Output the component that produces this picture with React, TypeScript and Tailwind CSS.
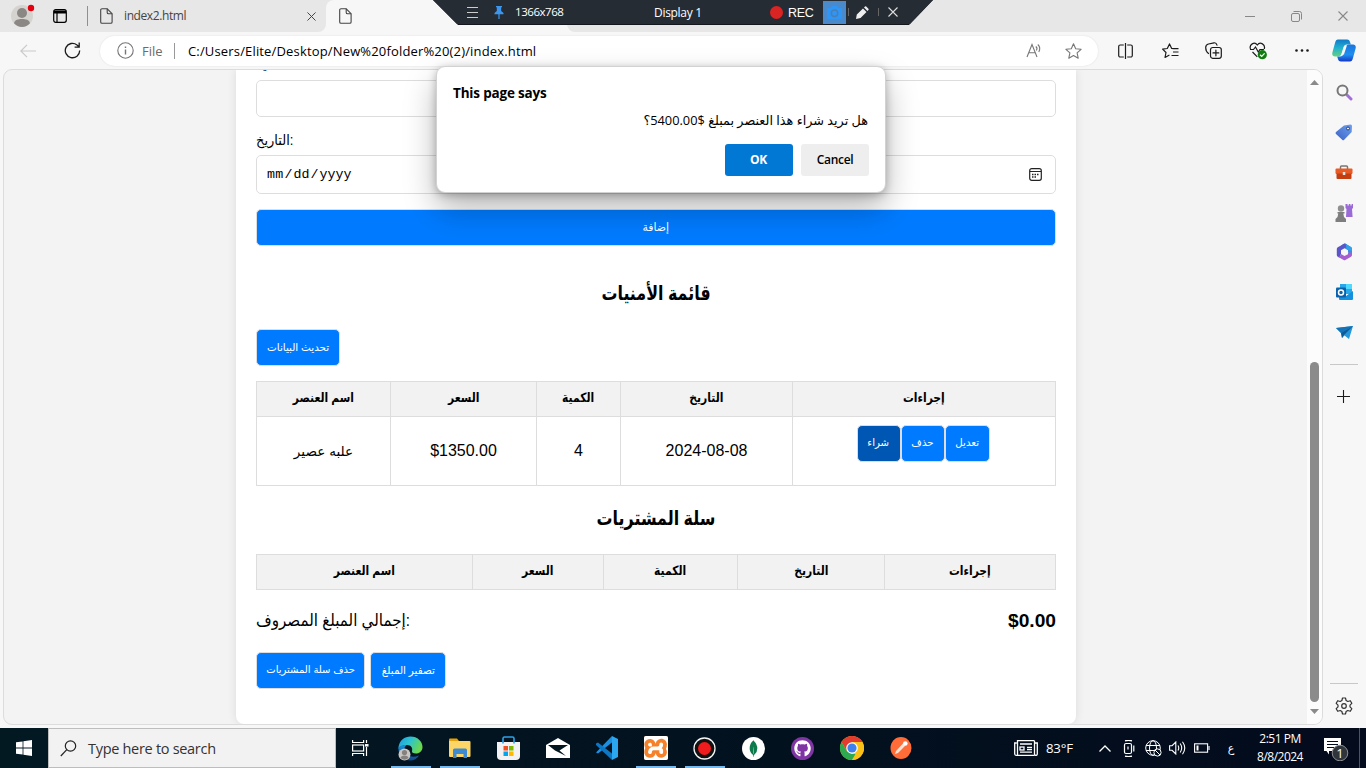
import type { ReactNode } from "react";
import { SiXampp, SiMongodb } from "react-icons/si";
import { FaGithub } from "react-icons/fa";

const UI = "font-['Open_Sans','Noto_Sans',sans-serif]";
const PAGE = "font-['Liberation_Sans','DejaVu_Sans',sans-serif]";

/* ---------- browser icons ---------- */

const FileIcon = () => (
  <svg width="13" height="16" viewBox="0 0 13 16" fill="none" stroke="#444" strokeWidth="1.1">
    <path d="M2 .8h5.2l4.9 4.9v8.2a1.3 1.3 0 0 1-1.3 1.3H2A1.3 1.3 0 0 1 .7 13.9V2.1A1.3 1.3 0 0 1 2 .8Z" />
    <path d="M7.2.8v3.6a1.3 1.3 0 0 0 1.3 1.3h3.6" />
  </svg>
);

const Cross = ({ size, color }: { size: number; color: string }) => (
  <svg width={size} height={size} viewBox="0 0 10 10" stroke={color} strokeWidth="1.1" fill="none">
    <path d="M.5.5l9 9M9.5.5l-9 9" />
  </svg>
);

const TabStrip = () => (
  <div className="flex h-8 w-full shrink-0 bg-[#f7f7f7]">
    <div className="flex w-[326px] items-center rounded-br-lg bg-[#e7e7e7] pl-[11px]">
      <svg width="24" height="24" viewBox="0 0 24 24">
        <circle cx="11" cy="12" r="11" fill="#d5d3d0" />
        <circle cx="11" cy="9" r="5" fill="#8b8784" />
        <path d="M3 19.3C4 15.6 7 15 11 15s7 .6 8 4.300C17 21.600 14 23 11 23s-6-1.400-8-3.700Z" fill="#8b8784" />
        <circle cx="20" cy="4" r="3.200" fill="#e3000f" />
      </svg>
      <svg className="ml-[18px]" width="14" height="14" viewBox="0 0 14 14" fill="none" stroke="#000" strokeWidth="1.200">
        <rect x=".7" y=".7" width="12.600" height="12.600" rx="2" />
        <path d="M1 3h12" strokeWidth="3" />
        <path d="M4 4v9" />
      </svg>
      <div className="ml-5 h-5 w-px bg-[#8f8f8f]" />
      <div className="ml-3"><FileIcon /></div>
      <span className={`${UI} ml-[11px] w-[180px] text-[12px] leading-4 tracking-[-0.4px] text-[#444]`}>index2.html</span>
      <div className="ml-[3px]"><Cross size={9} color="#444" /></div>
    </div>
    <div className="w-[241px] bg-linear-to-b from-[#e7e7e7] from-50% to-[#f7f7f7] to-50%">
      <div className="flex h-full items-center rounded-t-lg bg-[#f7f7f7] pl-[13px]"><FileIcon /></div>
    </div>
    <div className="flex flex-1 items-center justify-end rounded-bl-lg bg-[#e7e7e7] pr-[18px]">
      <div className="h-px w-[10px] bg-[#888]" />
      <svg className="ml-9" width="11" height="11" viewBox="0 0 11 11" fill="none" stroke="#888">
        <rect x=".5" y="2.500" width="8" height="8" rx="1.500" />
        <path d="M2.500 .5h6a2 2 0 0 1 2 2v6" />
      </svg>
      <div className="ml-9"><Cross size={10} color="#888" /></div>
    </div>
  </div>
);

const Copilot = () => (
  <svg width="24" height="23" viewBox="0 0 24 23">
    <defs>
      <linearGradient id="cpa" x1="0" y1="0" x2="0" y2="1"><stop offset="0" stopColor="#1279c9" /><stop offset=".5" stopColor="#21b1cf" /><stop offset="1" stopColor="#65d27d" /></linearGradient>
      <linearGradient id="cpb" x1="0" y1="0" x2="0" y2="1"><stop offset="0" stopColor="#1b75dd" /><stop offset=".6" stopColor="#1e8ff0" /><stop offset="1" stopColor="#1637c7" /></linearGradient>
    </defs>
    <path d="M6 .5h9c2 0 2.600 1 3.200 3l.6 2H15c-2 0-3 1-3.600 3L9.500 15c-.6 1.600-1.500 2.500-3.500 2.500H3C.8 17.500-.2 16 .4 13.500L3 4C3.600 1.500 4.500.5 6 .5Z" fill="url(#cpa)" />
    <path d="M18 22.500H9c-2 0-2.600-1-3.200-3l-.6-2H8c2 0 3-1 3.600-3L13.500 8c.6-1.600 1.500-2.500 3.500-2.500h4c2.200 0 3.200 1.500 2.600 4L21 19c-.6 2.500-1.500 3.500-3 3.500Z" fill="url(#cpb)" />
    <path d="M12.200 7.500 15 6.200 12 15.300 8.800 16.900Z" fill="#f7f7f7" />
  </svg>
);

const Toolbar = () => (
  <div className="flex h-[37px] w-full shrink-0 items-center bg-[#f7f7f7]">
    <svg className="ml-5" width="16" height="14" viewBox="0 0 16 14" fill="none" stroke="#c9c9c9" strokeWidth="1.200"><path d="M16 7H1M7 .8.8 7 7 13.200" /></svg>
    <svg className="ml-7" width="17" height="17" viewBox="0 0 17 17" fill="none" stroke="#1b1b1b" strokeWidth="1.300"><path d="M15.700 8.500A7.200 7.200 0 1 1 13 2.900L15 5M15.200.6V5.200H10.600" /></svg>
    <div className="ml-[19px] flex h-[30px] w-[998px] items-center rounded-full bg-white pl-[17px] shadow-[0_0_2px_#ddd]">
      <svg width="17" height="17" viewBox="0 0 17 17" fill="none" stroke="#767676" strokeWidth="1.100"><circle cx="8.500" cy="8.500" r="7.700" /><path d="M8.500 7.500v5M8.500 4.500v1.400" strokeWidth="1.400" /></svg>
      <span className={`${UI} ml-2 w-8 text-[13px] leading-4 text-[#6b6b6b]`}>File</span>
      <div className="h-4 w-px bg-[#999]" />
      <span className={`${UI} ml-[13px] w-[838px] whitespace-nowrap text-[13px] leading-4 tracking-[0.16px] text-black`}>C:/Users/Elite/Desktop/New%20folder%20(2)/index.html</span>
      <svg width="17" height="15" viewBox="0 0 17 15" fill="none" stroke="#777" strokeWidth="1.100"><path d="M1 14 6 1.500 11 14M2.800 9.800h6.400M9.800 3.500c1.300 1 1.300 2.800.6 4M11.800 1.500c2.200 2 2.200 5.200 1 7.500" /></svg>
      <svg className="ml-[22px]" width="17" height="16" viewBox="0 0 17 16" fill="none" stroke="#777" strokeWidth="1.100" strokeLinejoin="round"><path d="m8.500.8 2.200 4.900 5.400.6-4 3.600 1.100 5.300-4.700-2.700-4.700 2.700 1.100-5.300-4-3.600 5.400-.6Z" /></svg>
    </div>
    <svg className="ml-5" width="15" height="16" viewBox="0 0 15 16" fill="none" stroke="#1b1b1b" strokeWidth="1.200"><path d="M5.800 2H2.200A1.500 1.500 0 0 0 .7 3.500v9A1.500 1.500 0 0 0 2.200 14h3.600M9.200 2h3.600a1.500 1.500 0 0 1 1.500 1.500v9a1.500 1.500 0 0 1-1.500 1.500H9.200M7.500 0v16" /></svg>
    <svg className="ml-[29px]" width="17" height="16" viewBox="0 0 17 16" fill="none" stroke="#1b1b1b" strokeWidth="1.200" strokeLinejoin="round"><path d="M11.500 5.600 9.700 5.500 7.500.9 5.300 5.500.6 6.100 4 9.500l-1 5 4.400-2.500M11.500 5.600h5M11 9h5.500M9.500 12.500h7" /></svg>
    <svg className="ml-[26px]" width="17" height="17" viewBox="0 0 17 17" fill="none" stroke="#1b1b1b" strokeWidth="1.200" strokeLinecap="round"><rect x="5.500" y="5.500" width="10.800" height="10.800" rx="2.200" /><path d="M10.900 8v5.800M8 10.900h5.800M3.500 11.500C2 10.500.7 8 .7 5.500.7 3 1.500 2.500 3.500 2L9 .8c1.500-.3 2.500.6 3 2.400" /></svg>
    <svg className="ml-[27px]" width="18" height="18" viewBox="0 0 18 18" fill="none" stroke="#1b1b1b" strokeWidth="1.200"><path d="M1.500 7C-.2 2.500 5.500-.8 8.300 3c2.800-3.800 8.500-.5 6.900 4M1 7.500h3.500L6.500 5l2.800 5 1.600-2.500h4M3.500 10l4.800 4.800" /><circle cx="13.300" cy="12.700" r="4.600" fill="#107c10" stroke="none" /><path d="m11 12.800 1.700 1.600 2.900-3" stroke="#fff" /></svg>
    <svg className="ml-[28px]" width="14" height="3" viewBox="0 0 14 3" fill="#1b1b1b"><circle cx="1.500" cy="1.500" r="1.300" /><circle cx="7" cy="1.500" r="1.300" /><circle cx="12.500" cy="1.500" r="1.300" /></svg>
    <div className="ml-[23px]"><Copilot /></div>
  </div>
);

/* ---------- page ---------- */

const Btn = ({ children, className }: { children: ReactNode; className: string }) => (
  <button className={`flex h-[37px] items-center justify-center whitespace-nowrap rounded-[5px] border border-[#ddd] pb-px text-white ${className}`}>
    <span className="inline-block scale-x-97">{children}</span>
  </button>
);

const HEAD = ["اسم العنصر", "السعر", "الكمية", "التاريخ", "إجراءات"];

const HeadRow = () => (
  <tr className="h-9">
    {HEAD.map((h) => (
      <th key={h} className="border-y border-r border-[#ddd] bg-[#f2f2f2] p-0 pb-0.5 text-[12.800px] leading-4 font-bold first:border-l">
        <span className="inline-block scale-x-84">{h}</span>
      </th>
    ))}
  </tr>
);

const Cell = ({ children, top = false }: { children: ReactNode; top?: boolean }) => (
  <td className={`border-r border-b border-[#ddd] p-0 text-center first:border-l ${top ? "pt-2 align-top" : "align-middle"}`}>{children}</td>
);

const PageContent = () => (
  <div className={`${PAGE} flex w-[840px] flex-col rounded-b-lg bg-white px-5 text-black shadow-[0_0_10px_rgba(0,0,0,0.1)]`}>
    <label className="-mt-[13px] block h-[18px] origin-left scale-x-92 text-[14px] leading-[15px]">الكمية:</label>
    <div className="mt-[5px] h-[37px] shrink-0 rounded-[5px] border border-[#ddd]" />
    <label className="mt-[15px] block h-[18px] origin-left scale-x-93 text-[14px] leading-[17px]">التاريخ:</label>
    <div className="mt-[5px] flex h-[39px] shrink-0 items-center justify-between rounded-[5px] border border-[#ddd] pr-[13px] pl-[10px]">
      <span className="font-['Liberation_Mono',monospace] text-[13.333px] leading-4">
        <span className="tracking-[0.2px]">mm</span><span className="mx-[1px]">/</span>dd<span className="mx-[1px]">/</span>yyyy
      </span>
      <svg width="13" height="13" viewBox="0 0 13 13" fill="none" stroke="#222"><rect x=".7" y=".7" width="11.600" height="11.600" rx="2" strokeWidth="1.200" /><path d="M1 3.500h11" /><path d="M3 6.500h7M3 9h4.500" strokeWidth="1.500" strokeDasharray="1.500 1" /></svg>
    </div>
    <Btn className="mt-[15px] w-full shrink-0 bg-[#007bff] text-[11.200px]">إضافة</Btn>
    <h2 className="mt-[33px] h-7 scale-x-[0.795] text-center text-[20px] leading-[28px] font-bold">قائمة الأمنيات</h2>
    <Btn className="mt-[22px] w-[84px] shrink-0 bg-[#007bff] text-[10.700px]">تحديث البيانات</Btn>
    <table className="mt-[15px] w-[800px] table-fixed border-separate border-spacing-0">
      <colgroup>
        <col className="w-[135px]" /><col className="w-[146px]" /><col className="w-[84px]" /><col className="w-[172px]" /><col className="w-[263px]" />
      </colgroup>
      <thead><HeadRow /></thead>
      <tbody>
        <tr className="h-[69px]">
          <Cell><span className="text-[13.600px]">علبه عصير</span></Cell>
          <Cell>$1350.00</Cell>
          <Cell>4</Cell>
          <Cell>2024-08-08</Cell>
          <Cell top>
            <div className="flex justify-center pr-[2px]">
              <Btn className="w-11 bg-[#0056b3] text-[10.500px]">شراء</Btn>
              <Btn className="w-11 bg-[#007bff] text-[10.500px]">حذف</Btn>
              <Btn className="w-[45px] bg-[#007bff] text-[10.500px]">تعديل</Btn>
            </div>
          </Cell>
        </tr>
      </tbody>
    </table>
    <h2 className="mt-[18px] h-7 scale-x-[0.795] text-center text-[20px] leading-[28px] font-bold">سلة المشتريات</h2>
    <table className="mt-[22px] w-[800px] table-fixed border-separate border-spacing-0">
      <colgroup>
        <col className="w-[217px]" /><col className="w-[131px]" /><col className="w-[134px]" /><col className="w-[147px]" /><col className="w-[171px]" />
      </colgroup>
      <thead><HeadRow /></thead>
    </table>
    <div className="mt-[20px] flex h-[22px] items-center justify-between">
      <span className="inline-block origin-left scale-x-[0.89] text-[17px] leading-[22px]">إجمالي المبلغ المصروف:</span>
      <span className="text-[19.200px] leading-[22px] font-bold">$0.00</span>
    </div>
    <div className="mt-[20px] flex gap-[5px]">
      <Btn className="w-[109px] bg-[#007bff] text-[10.300px]">حذف سلة المشتريات</Btn>
      <Btn className="w-[76px] bg-[#007bff] text-[10.700px]">تصفير المبلغ</Btn>
    </div>
  </div>
);

const Scrollbar = () => (
  <div className="flex w-[15px] flex-col items-center bg-[#fcfcfc]">
    <svg className="mt-2.5" width="9" height="5" viewBox="0 0 9 5" fill="#8b8b8b"><path d="M4.500 0 9 5H0Z" /></svg>
    <div className="mt-[277px] h-[340px] w-[9px] rounded-full bg-[#8b8b8b]" />
    <svg className="mt-[7px]" width="9" height="5" viewBox="0 0 9 5" fill="#8b8b8b"><path d="M4.500 5 9 0H0Z" /></svg>
  </div>
);

/* ---------- sidebar ---------- */

const Slot = ({ children }: { children: ReactNode }) => (
  <div className="flex h-10 w-full items-center justify-center">{children}</div>
);

const Sidebar = () => (
  <div className="flex w-[42px] flex-col items-center pt-[3px]">
    <Slot>
      <svg width="17" height="17" viewBox="0 0 17 17" fill="none"><path d="m11 11 4 4" stroke="#a070d8" strokeWidth="3" strokeLinecap="round" /><circle cx="6.500" cy="6.500" r="5" stroke="#777" strokeWidth="2" /></svg>
    </Slot>
    <Slot>
      <svg width="18" height="17" viewBox="0 0 18 17"><defs><linearGradient id="tag" x1="1" y1="0" x2="0" y2="1"><stop stopColor="#6fa0f0" /><stop offset="1" stopColor="#3a62c4" /></linearGradient></defs><path d="M9 1.500 15.500.5Q17 .5 17 2l-.3 6L9.200 15.700q-1 1-2 0L1 10Q0 9 1 8Z" fill="url(#tag)" /><circle cx="13" cy="4.500" r="1.500" fill="#eee" stroke="#22407f" /></svg>
    </Slot>
    <Slot>
      <svg width="18" height="15" viewBox="0 0 18 15"><path d="M5.500 4V2a1 1 0 0 1 1-1h5a1 1 0 0 1 1 1v2" fill="none" stroke="#777" strokeWidth="1.500" /><rect x=".5" y="3.500" width="17" height="5.500" rx="1" fill="#ea5a24" /><path d="M1.500 8.500h15V13q0 1-1 1h-13q-1 0-1-1Z" fill="#c43e12" /><rect x="7.800" y="7" width="2.500" height="3" fill="#e5e5e5" /></svg>
    </Slot>
    <Slot>
      <svg className="mt-px" width="18" height="18" viewBox="0 0 18 18"><path d="M10.500 0h2v1.500h1.300V0h1.600v1.500h1.200V0H18v4l-1 1 .6 8H11l.5-8-1-1Z" fill="#9a6ad6" /><circle cx="6" cy="4.500" r="3.200" fill="#8f8f8f" /><path d="M2.500 8h7v1.500H8.300L9 13l2 2v3H.5v-3l2-2 .8-3.500h-.8Z" fill="#7e7e7e" /></svg>
    </Slot>
    <Slot>
      <svg width="17" height="18" viewBox="0 0 17 18"><path d="M5.500 2.300 8 .8q.8-.5 1.600 0l5.400 3.200q1 .6 1 1.700v6L12 9.500V7.200L6 3.800Z" fill="#3b8be0" /><path d="M8.500.5 1.800 4.200q-1 .6-1 1.700v6.200q0 1 1 1.600l1.700 1L5 11V7.200l3.500-2L11 3.800V1.600L9.500.7Z" fill="#5a55c8" /><path d="M2 13.800 7.600 17q.9.500 1.800 0l5.600-3.300q1-.6 1-1.700V9.500l-4 .2v1.500L8.500 13 5 11Q4.500 14 2 13.800Z" fill="#a75fd0" /><path d="M9.500.7 15 4q1 .6 1 1.700V8L11 6.500Z" fill="#2ea3ea" /><path d="m8.500 6 2.700 1.500v3L8.500 12l-2.700-1.500v-3Z" fill="#f7f7f7" /></svg>
    </Slot>
    <Slot>
      <svg width="17" height="16" viewBox="0 0 17 16"><rect x="4" y="0" width="12" height="10" fill="#28a8ea" /><rect x="10" y="0" width="6" height="5" fill="#50d9ff" /><path d="M3 8l7 4 7-5v8q0 1-1 1H4q-1 0-1-1Z" fill="#1490df" /><rect x="0" y="3.500" width="10" height="10" rx="1" fill="#0a62ad" /><circle cx="5" cy="8.500" r="2.500" fill="none" stroke="#fff" strokeWidth="1.500" /></svg>
    </Slot>
    <Slot>
      <svg className="mt-0.5" width="17" height="14" viewBox="0 0 17 14"><path d="M0 2 17 0 13 13 8.500 9.500 6 12 5 7Z" fill="#2397dc" /><path d="M0 2 17 0 5 7Z" fill="#1473b8" /><path d="m5 7 12-7L8 9l-2 3Z" fill="#0d5a96" /></svg>
    </Slot>
    <div className="mt-3 h-px w-7 bg-[#c8c8c8]" />
    <svg className="mt-[25px] mr-px" width="13" height="13" viewBox="0 0 13 13" stroke="#1b1b1b" strokeWidth="1.100"><path d="M6.500 0v13M0 6.500h13" /></svg>
    <div className="mt-[280px] h-px w-7 bg-[#c8c8c8]" />
    <svg className="mt-3" width="20" height="20" viewBox="0 0 20 20" fill="none" stroke="#333" strokeWidth="1.200" strokeLinejoin="round"><circle cx="10" cy="10" r="2.300" /><path d="M8.500 2h3l.6 2.500 1.700 1 2.500-.8 1.500 2.600L16 9.100v1.800l1.800 1.800-1.500 2.600-2.500-.8-1.700 1-.6 2.500h-3l-.6-2.500-1.700-1-2.500.8-1.500-2.600L4 10.900V9.100L2.200 7.300l1.500-2.600 2.500.8 1.700-1Z" /></svg>
  </div>
);

/* ---------- overlays ---------- */

const RecorderBar = () => (
  <div className="absolute top-0 left-[433px] h-[25px] w-[500px] bg-[#14181d] [clip-path:polygon(0_0,100%_0,476px_100%,25px_100%)]">
    <div className={`${UI} flex h-6 items-center bg-[#262c34] pl-[34px] text-white`}>
      <svg width="11" height="11" viewBox="0 0 11 11" stroke="#ccc"><path d="M0 .5h11M0 5.500h11M0 10.500h11" /></svg>
      <svg className="ml-[16px]" width="10" height="13" viewBox="0 0 10 13" fill="#3c96ee"><path d="M2 0h6v1.200H7.200V5L9.500 7v1.200h-9V7l2.300-2V1.200H2ZM4.400 8.200h1.200V13H4.400Z" /></svg>
      <span className="ml-[11px] w-[139px] text-[11.500px] leading-4 font-medium tracking-[-0.45px]">1366x768</span>
      <span className="w-[116px] pt-0.5 text-[12px] leading-4 tracking-[-0.3px]">Display 1</span>
      <div className="size-[13px] rounded-full bg-[#d92424]" />
      <span className="ml-[5px] w-[35px] pt-0.5 font-['Liberation_Sans',sans-serif] text-[12.500px] leading-4 tracking-[-0.3px]">REC</span>
      <div className="flex h-[23px] w-[23px] items-center justify-center bg-[#4a8acb]">
        <svg width="15" height="13" viewBox="0 0 15 13"><path d="M5 0h5l1 2h3q1 0 1 1v9q0 1-1 1H1q-1 0-1-1V3q0-1 1-1h3Z" fill="#2f96f5" /><circle cx="7.500" cy="7.200" r="3.200" fill="none" stroke="#4a7fb5" strokeWidth="1.500" /></svg>
      </div>
      <div className="ml-[2px] h-2 w-px bg-[#666]" />
      <svg className="ml-[7px]" width="13" height="13" viewBox="0 0 13 13" fill="#eee"><path d="m0 13 .8-4.500L7 2.500 10.500 6 4.500 12ZM8 1.500 9 .6q.6-.6 1.200 0l2.200 2.200q.6.600 0 1.200L11.500 5Z" /></svg>
      <div className="ml-[9px] h-2 w-px bg-[#666]" />
      <div className="ml-[9px]"><Cross size={10} color="#ddd" /></div>
    </div>
  </div>
);

const ConfirmDialog = () => (
  <div className={`${UI} absolute top-[66px] left-[436px] flex h-[127px] w-[450px] flex-col rounded-[9px] border border-[#d2d2d2] bg-white px-4 pt-[16px] text-black shadow-[0_16px_32px_rgba(0,0,0,0.28),0_2px_8px_rgba(0,0,0,0.25)]`}>
    <div className="h-5 text-[13.500px] leading-5 font-bold tracking-[-0.18px]">This page says</div>
    <div dir="rtl" className="mt-2 flex h-5 pr-px font-['Open_Sans','DejaVu_Sans',sans-serif] text-[12.800px] leading-[19px] whitespace-nowrap">
      هل تريد شراء هذا العنصر بمبلغ $5400.00؟
    </div>
    <div className="mt-[13px] flex justify-end gap-2 text-[12px] font-semibold">
      <button className="h-8 w-[68px] rounded-[3px] bg-[#0078d4] pr-px font-bold tracking-[-0.3px] text-white">OK</button>
      <button className="h-8 w-[68px] rounded-[3px] bg-[#eee] tracking-[-0.3px]">Cancel</button>
    </div>
  </div>
);

/* ---------- taskbar ---------- */

const TaskItem = ({ children, open = false }: { children: ReactNode; open?: boolean }) => (
  <div className="flex h-10 w-[49px] flex-col items-center">
    <div className="flex h-[38px] items-center pt-0.5">{children}</div>
    {open && <div className="h-0.5 w-10 bg-[#76b9ed]" />}
  </div>
);

const Taskbar = () => (
  <div className={`${UI} flex h-10 w-full shrink-0 items-center bg-linear-to-r from-[#021922] to-[#030b1c] text-white`}>
    <div className="flex w-12 justify-center">
      <svg width="16" height="16" viewBox="0 0 16 16" fill="#fff"><path d="M0 2.300 6.600 1.400v6.200H0ZM7.400 1.300 16 0v7.600H7.400ZM0 8.400h6.600v6.200L0 13.700ZM7.400 8.400H16V16l-8.600-1.200Z" /></svg>
    </div>
    <div className="flex h-10 w-72 items-center border border-[#bdbdbd] bg-[#f2f2f2] pl-[11px]">
      <svg width="17" height="17" viewBox="0 0 17 17" fill="none" stroke="#222" strokeWidth="1.200"><circle cx="10.500" cy="6" r="5.200" /><path d="M6.800 9.700.8 16" /></svg>
      <span className="ml-[11px] pt-px text-[14.500px] leading-5 tracking-[-0.3px] text-[#333]">Type here to search</span>
    </div>
    <div className="flex w-[50px] justify-center pr-[2px]">
      <svg width="17" height="16" viewBox="0 0 17 16" fill="none" stroke="#fff" strokeWidth="1.200"><path d="M.6 0v2.500h11V0M.6 16v-2.500h11V16M14.500 0v3M14.500 7v9" /><rect x=".6" y="5" width="11" height="6" /><path d="M13 5.300h3.500" strokeWidth="2.500" /></svg>
    </div>
    <TaskItem open>
      <svg width="25" height="25" viewBox="0 0 25 25">
        <defs>
          <linearGradient id="e1" x1="0" y1="0" x2="1" y2=".4"><stop stopColor="#1e9ae0" /><stop offset=".5" stopColor="#2cc3d2" /><stop offset="1" stopColor="#6ad84f" /></linearGradient>
          <linearGradient id="e2" x1="0" y1="0" x2="0" y2="1"><stop stopColor="#1c8fd8" /><stop offset="1" stopColor="#114a8b" /></linearGradient>
        </defs>
        <path d="M.5 11C1.500 4.500 6.500.5 12.500.5c7 0 12 5 12 10.500 0 4-3 6.500-6.500 6.500-3 0-4.500-1-4-2.500 1-3-1-6-5-6C5 9 2 10 .5 13Z" fill="url(#e1)" />
        <path d="M.5 12C2 9.500 5 8.500 8.500 9c-1.500 1-2.500 3-2 5.500 1 5 7 8 14.500 5-2 3-5 5-8.500 5C5.500 24.500 0 19 .5 12Z" fill="url(#e2)" />
        <circle cx="6.500" cy="18.500" r="6" fill="#c9c6c3" /><circle cx="6.500" cy="16.500" r="2.600" fill="#85817e" /><path d="M2.500 22q.5-2.500 4-2.500t4 2.500q-4 3.500-8 0Z" fill="#85817e" />
      </svg>
    </TaskItem>
    <TaskItem open>
      <svg width="22" height="20" viewBox="0 0 22 20"><path d="M0 1.500Q0 .5 1 .5h7l2 2.500H0Z" fill="#e6a10c" /><path d="M0 3h20.500q1 0 1 1v14q0 1-1 1H1q-1 0-1-1Z" fill="#fdd466" /><path d="M4 20v-8q0-1.500 1.500-1.500h11Q18 10.500 18 12v8h-3.500v-4h-7v4Z" fill="#3d8ad0" /></svg>
    </TaskItem>
    <TaskItem>
      <svg width="23" height="24" viewBox="0 0 23 24"><path d="M0 6h23v14q0 4-4 4H4q-4 0-4-4Z" fill="#f2f2f2" /><path d="M6 7.500V2.500q0-1.500 1.500-1.500h8q1.500 0 1.500 1.500v5" fill="none" stroke="#2aa3e8" strokeWidth="1.600" /><path fill="#f25022" d="M6.500 10h4.500v4.500H6.500Z" /><path fill="#7fba00" d="M12 10h4.500v4.500H12Z" /><path fill="#00a4ef" d="M6.500 15.500h4.500V20H6.500Z" /><path fill="#ffb900" d="M12 15.500h4.500V20H12Z" /></svg>
    </TaskItem>
    <TaskItem>
      <svg width="24" height="20" viewBox="0 0 24 20"><path d="M0 7 12 0l12 7v13H0Z" fill="#fff" /><path d="M2 7h20l-8.500 5.500L20 18 9 12.500Z" fill="#021620" /></svg>
    </TaskItem>
    <TaskItem>
      <svg width="24" height="24" viewBox="0 0 24 24"><path d="m17 0 6 3v18l-6 3L7 14.500 3 17.500 1 16.500V7.500L3 6.500l4 3ZM17 6.500 10.500 12 17 17.500Z" fill="none" /><path d="M1 16.500 17 0v6.500L3 17.500Z" fill="#1f8fdc" /><path d="M1 7.500 3 6.500 17 17.500V24L1 9Z" fill="#0d77c4" /><path d="m17 0 6 3v18l-6 3Z" fill="#2ba7f2" /></svg>
    </TaskItem>
    <TaskItem open>
      <div className="flex size-6 items-center justify-center overflow-hidden rounded-[2px] bg-[#f5822a]"><SiXampp size={31} color="#fff" className="shrink-0" /></div>
    </TaskItem>
    <TaskItem open>
      <svg width="23" height="23" viewBox="0 0 23 23"><circle cx="11.500" cy="11.500" r="10.500" fill="#111" stroke="#f4f4f4" strokeWidth="1.300" /><circle cx="11.500" cy="11.500" r="6.500" fill="#ee1c1c" /></svg>
    </TaskItem>
    <TaskItem>
      <div className="flex size-[23px] items-center justify-center rounded-full bg-white"><SiMongodb size={17} color="#0d7a4c" /></div>
    </TaskItem>
    <TaskItem>
      <div className="flex size-[23px] items-center justify-center rounded-full bg-[#8035a5]"><FaGithub size={17} color="#fff" /></div>
    </TaskItem>
    <TaskItem>
      <svg width="24" height="24" viewBox="0 0 24 24"><circle cx="12" cy="12" r="12" fill="#fbc116" /><path d="M1.600 6A12 12 0 0 1 22.400 6H12L6.800 15Z" fill="#e33b2e" /><path d="M1.600 6 6.800 15 12 18h5.200L12 24A12 12 0 0 1 1.600 6Z" fill="#2da94f" /><path d="M22.400 6A12 12 0 0 1 12 24l5.200-9L12 6Z" fill="#fbc116" /><circle cx="12" cy="12" r="5.800" fill="#fff" /><circle cx="12" cy="12" r="4.600" fill="#3f7fee" /></svg>
    </TaskItem>
    <TaskItem>
      <svg width="22" height="24" viewBox="0 0 22 24"><ellipse cx="11" cy="12" rx="10.500" ry="11" fill="#ff6c37" /><path d="m5 18 1-3 7-7.500 2.200 2.200L8 17Z" fill="#ffe3d6" /><circle cx="15.300" cy="7.500" r="2.300" fill="#fff" /></svg>
    </TaskItem>
    <svg className="ml-[89px]" width="24" height="16" viewBox="0 0 24 16" fill="none" stroke="#fff" strokeWidth="1.300"><path d="M3.500 15.300H2A1.400 1.400 0 0 1 .7 14V3h2M20.500 15.300H3.500V.7h17M20.500.7V3h2.800v11a1.400 1.400 0 0 1-2.800 0ZM6 4h12M13 7.500h5M13 9.700h5M6 12.200h12" /><rect x="6" y="7" width="4" height="3" /></svg>
    <span className="ml-2 w-[51px] text-[13.200px] leading-5 tracking-[-0.2px]">83°F</span>
    <svg className="ml-[2px]" width="12" height="7" viewBox="0 0 12 7" fill="none" stroke="#fff" strokeWidth="1.300"><path d="M.5 6.500 6 1l5.500 5.500" /></svg>
    <svg className="ml-[12px]" width="14" height="17" viewBox="0 0 14 17" fill="none" stroke="#fff" strokeWidth="1.200"><rect x="1.500" y="3.500" width="7" height="10" rx="1.500" /><path d="M10.800 5.500v6M2 .8q3.500-1 7 0M2 16.200q3.500 1 7 0M5 6.500v3" /></svg>
    <svg className="ml-[8px]" width="17" height="17" viewBox="0 0 17 17" fill="none" stroke="#fff"><circle cx="8" cy="8" r="7.300" /><ellipse cx="8" cy="8" rx="3.500" ry="7.300" /><path d="M1 5.500h14M1 10.500h14" /><circle cx="12.500" cy="12.500" r="3.600" fill="#030f1c" /><path d="m10 10 5 5" /></svg>
    <svg className="ml-[7px]" width="17" height="14" viewBox="0 0 17 14" fill="none" stroke="#fff" strokeWidth="1.100"><path d="M.6 4.700h2.500L6.800 1v12L3.100 9.300H.6ZM9 4.500q1.500 2.500 0 5M11.200 2.500q3 4.500 0 9M13.500.8q4.500 6.200 0 12.400" /></svg>
    <svg className="ml-[8px]" width="16" height="10" viewBox="0 0 16 10" fill="none" stroke="#fff" strokeWidth="1.100"><rect x=".6" y=".8" width="13" height="8.400" /><path d="M15 3v4" /><path d="M2.500 2.500h2v5h-2Z" fill="#fff" stroke="none" /></svg>
    <span className="ml-[14px] w-[14px] pt-0.5 text-center font-['DejaVu_Sans',sans-serif] text-[11px] leading-5">ع</span>
    <div className="ml-[12px] flex w-[60px] flex-col items-center text-[12px] leading-[18px] tracking-[-0.5px] whitespace-nowrap">
      <span>2:51 PM</span>
      <span>8/8/2024</span>
    </div>
    <svg className="ml-[14px]" width="25" height="25" viewBox="0 0 25 25"><path d="M0 2h17v13H5v3.500L2.500 15H0Z" fill="#fff" /><path d="M3 5.500h11M3 8.500h11M3 11.500h7" stroke="#030d1c" strokeWidth="1.200" /><circle cx="16" cy="17" r="7.800" fill="#30343b" stroke="#8a8d92" /><text x="16" y="21.500" textAnchor="middle" fontSize="13" fill="#fff" fontFamily="Open Sans">1</text></svg>
    <div className="ml-[10px] h-10 w-px bg-[#4a5560]" />
  </div>
);

export default function App() {
  return (
    <div className="relative flex h-[768px] w-[1366px] flex-col overflow-hidden bg-[#f7f7f7]">
      <TabStrip />
      <Toolbar />
      <div className="flex h-[659px] w-full shrink-0">
        <div className="ml-[3px] flex h-[656px] w-[1320px] overflow-hidden rounded-[9px] border border-[#dcdcdc] bg-[#f3f3f3]">
          <div className="flex w-[1303px] overflow-hidden pl-[232px]"><PageContent /></div>
          <Scrollbar />
        </div>
        <Sidebar />
      </div>
      <Taskbar />
      <RecorderBar />
      <ConfirmDialog />
    </div>
  );
}
